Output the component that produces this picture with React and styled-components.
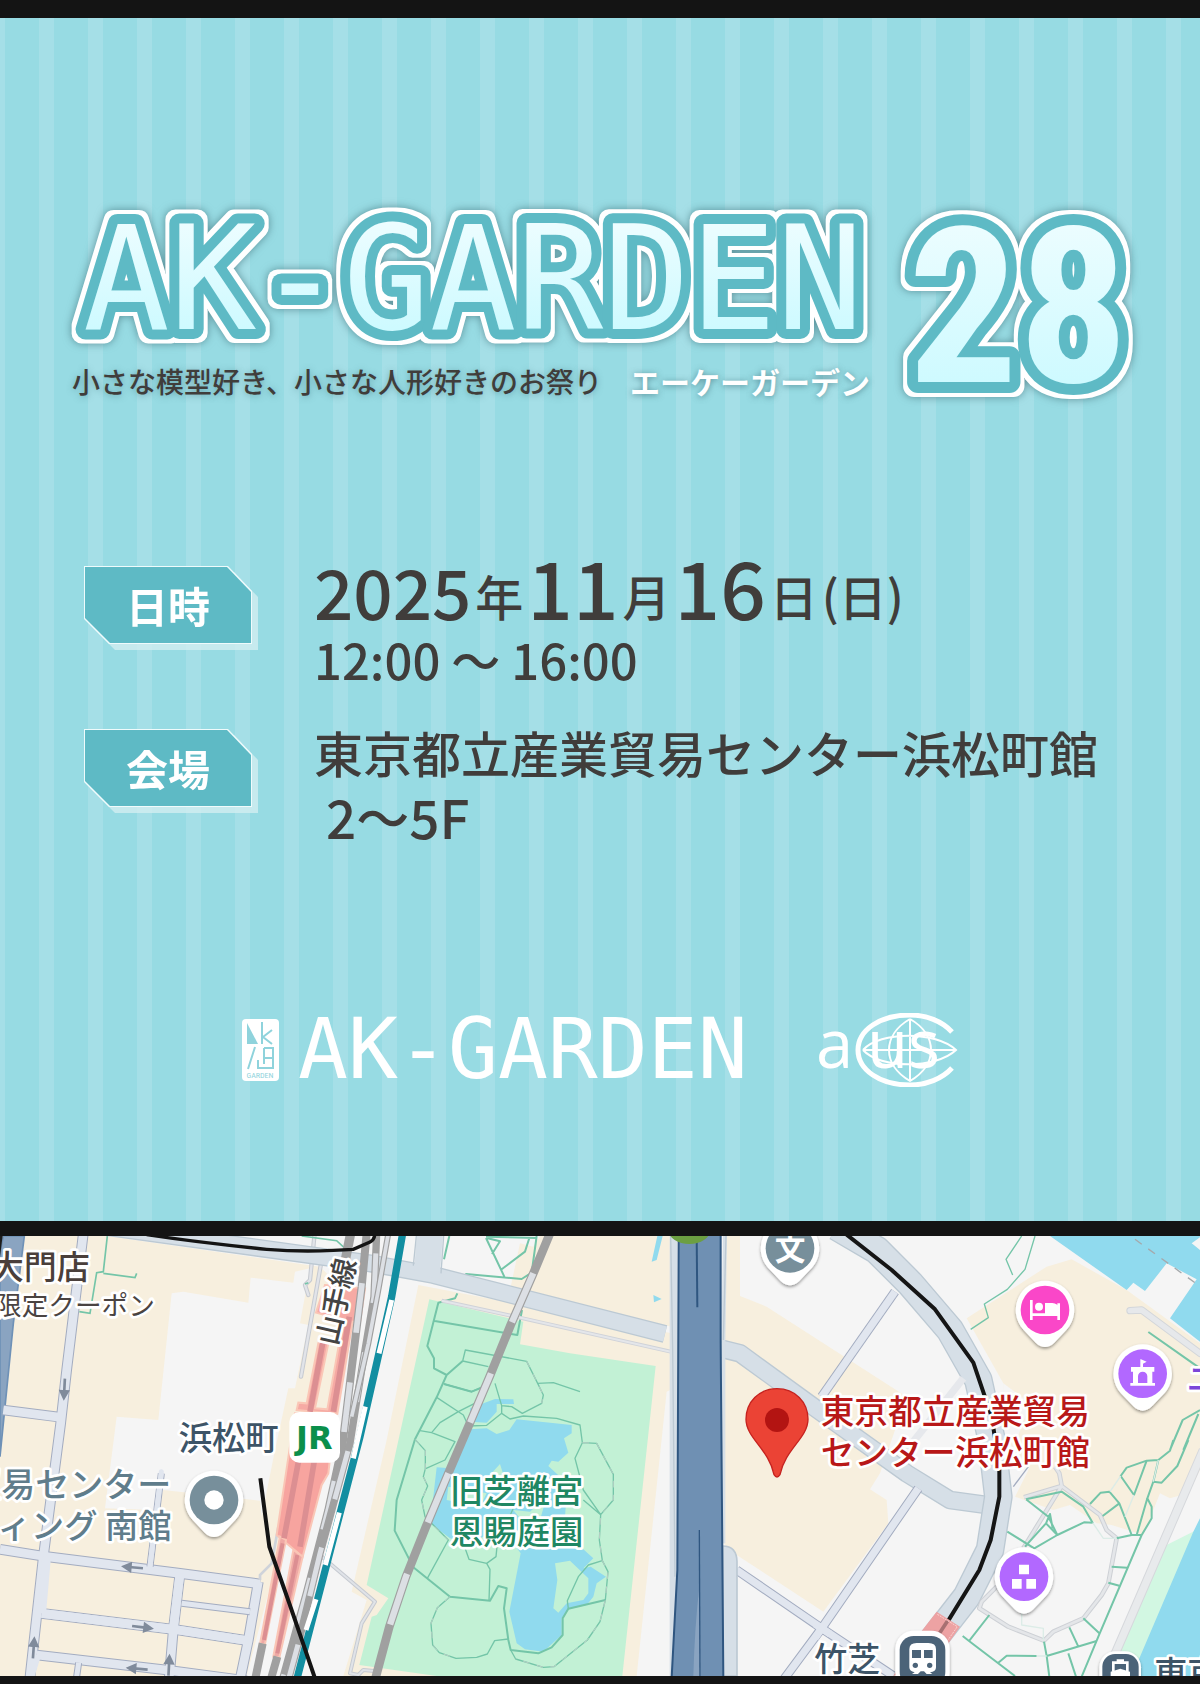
import React from 'react';
import styled, { createGlobalStyle } from 'styled-components';

const ink = '#403d3b';
const teal = '#5ebac5';
const jp = '"Noto Sans CJK JP", "Noto Sans", sans-serif';

const GlobalStyle = createGlobalStyle`
  *, *::before, *::after { box-sizing: border-box; }
  body { margin: 0; background: #141414; }
  h1, p, dl, dd, dt { margin: 0; }
`;

const Page = styled.main`
  display: flex;
  flex-direction: column;
  gap: 15px;
  padding: 18px 0 8px;
  background: #141414;
  color: ${ink};
  font-family: ${jp};
  overflow: hidden;
`;

const Poster = styled.section`
  padding: 182px 60px 134px;
  background: repeating-linear-gradient(
    90deg,
    #a5dfe7 0 5px,
    #97dbe3 5px 39px,
    #a5dfe7 39px 49px
  );
`;

const Heading = styled.h1`
  display: grid;
  grid-template-columns: 83fr 25fr;
  font-weight: 400;
`;

const HeadingLeft = styled.span`
  display: flex;
  flex-direction: column;
  gap: 11px;
`;

const Art = styled.svg`
  display: block;
  width: 100%;
  overflow: visible;
`;

const LogoText = styled.text`
  font-family: ${p => (p.$narrow ? '"Roboto Condensed", Roboto, sans-serif' : '"DejaVu Sans Mono", monospace')};
  font-weight: ${p => (p.$narrow ? 700 : 400)};
  font-size: ${p => p.$size}px;
  stroke: ${teal};
  stroke-width: ${p => (p.$narrow ? 22 : 20)}px;
  stroke-linejoin: round;
  paint-order: stroke;
`;

const Tagline = styled.span`
  display: flex;
  align-items: center;
  gap: 28px;
  padding-left: 12px;
  line-height: 40px;
  white-space: nowrap;
`;

const Lead = styled.span`
  font-size: 28px;
  font-weight: 500;
  text-shadow: 0 1px 6px rgba(60, 110, 120, 0.5);
`;

const Reading = styled.span`
  color: #fff;
  font-size: 30px;
  font-weight: 700;
  text-shadow: 0 1px 6px rgba(60, 110, 120, 0.7);
`;

const Details = styled.dl`
  display: flex;
  flex-direction: column;
  gap: 29px;
  margin-top: 135px;
  padding-left: 24px;
`;

const Detail = styled.div`
  display: flex;
  align-items: flex-start;
  gap: 62px;
`;

const Badge = styled.dt`
  flex: none;
  padding-top: ${p => p.$drop}px;
  filter: drop-shadow(6px 6px 0 rgba(214, 239, 242, 0.75));
`;

const cut = 'polygon(0 0, calc(100% - 24px) 0, 100% 25px, 100% 100%, 25px 100%, 0 calc(100% - 25px))';

const BadgeFrame = styled.span`
  display: block;
  padding: 1px;
  background: #effbfc;
  clip-path: ${cut};
`;

const BadgeFace = styled.span`
  display: block;
  width: 166px;
  line-height: 76px;
  background: ${teal};
  clip-path: ${cut};
  color: #fff;
  font-size: 42px;
  font-weight: 700;
  text-align: center;
`;

const DateLine = styled.p`
  display: flex;
  align-items: baseline;
  gap: 4px;
  margin-bottom: 2px;
  line-height: 1;
  font-weight: 500;
  white-space: nowrap;
`;

const Num = styled.span`
  font-size: ${p => (p.$big ? 80 : 69)}px;
`;

const Unit = styled.span`
  align-self: flex-end;
  padding-bottom: 6px;
  font-size: 48px;
`;

const Line = styled.p`
  padding-left: ${p => (p.$indent ? 12 : 0)}px;
  font-size: ${p => p.$size}px;
  line-height: 64px;
  font-weight: 500;
  white-space: nowrap;
`;

const Organizers = styled.footer`
  display: flex;
  align-items: center;
  margin-top: 165px;
  padding-left: 182px;
  height: 74px;
  color: #fff;
`;

const Card = styled.svg`
  flex: none;
  width: 37px;
  height: 62px;
  margin-right: 19px;
`;

const Wordmark = styled.span`
  font-family: "DejaVu Sans Mono", monospace;
  font-size: 83px;
  line-height: 74px;
  white-space: nowrap;
`;

const Acus = styled.svg`
  flex: none;
  width: 140px;
  height: 74px;
  margin-left: 70px;
`;

const AcusText = styled.text`
  font-family: "Open Sans", sans-serif;
  font-size: 67px;
  fill: #fff;
`;

const MapPanel = styled.section`
  background: #f5f5f5;
`;

const MapArt = styled.svg`
  display: block;
  width: 100%;
`;

const Label = styled.text`
  font-family: ${jp};
  font-size: ${p => p.$size || 100}px;
  font-weight: ${p => p.$weight || 500};
  fill: ${p => p.$color || '#3d5467'};
  stroke: ${p => (p.$plain ? 'none' : '#fff')};
  stroke-width: 16px;
  stroke-linejoin: round;
  paint-order: stroke;
`;

const JrText = styled.text`
  font-family: "DejaVu Sans", sans-serif;
  font-weight: 700;
  font-size: 96px;
  fill: #0a8f4b;
`;

const CardText = styled.text`
  font-family: "Roboto Condensed", Roboto, sans-serif;
  font-size: 8px;
  fill: #8fd3dc;
`;

function OutlineDefs({ id, top, bottom }) {
  return (
    <defs>
      <linearGradient id={`${id}-fill`} gradientUnits="userSpaceOnUse" x1="0" y1={top} x2="0" y2={bottom}>
        <stop offset="0" stopColor="#ecfdff" />
        <stop offset="1" stopColor="#cefaff" />
      </linearGradient>
      <filter id={`${id}-edge`} x="-10%" y="-20%" width="120%" height="150%" colorInterpolationFilters="sRGB">
        <feMorphology in="SourceAlpha" operator="dilate" radius="4" result="fat" />
        <feFlood floodColor="#fff" />
        <feComposite in2="fat" operator="in" result="white" />
        <feGaussianBlur in="fat" stdDeviation="4" result="soft" />
        <feFlood floodColor="#3f6f78" floodOpacity="0.7" />
        <feComposite in2="soft" operator="in" result="shade" />
        <feMerge>
          <feMergeNode in="shade" />
          <feMergeNode in="white" />
          <feMergeNode in="SourceGraphic" />
        </feMerge>
      </filter>
    </defs>
  );
}

function Road({ d, w = 40, fill = '#d6dfe7', edge = '#bcc9d3', border = 4, cap = 'butt' }) {
  return (
    <g fill="none" strokeLinejoin="round" strokeLinecap={cap}>
      <path d={d} stroke={edge} strokeWidth={w + border * 2} />
      <path d={d} stroke={fill} strokeWidth={w} />
    </g>
  );
}

function Streets({ list, w }) {
  return (
    <g fill="none" strokeLinejoin="round">
      {list.map((d, i) => <path key={`e${i}`} d={d} stroke="#a3acc0" strokeWidth={w + 6} />)}
      {list.map((d, i) => <path key={`f${i}`} d={d} stroke="#e1e6ef" strokeWidth={w} />)}
    </g>
  );
}

function Rail({ d, w = 22, dash = '150 150', offset = 0 }) {
  return (
    <g fill="none">
      <path d={d} stroke="#a0a0a0" strokeWidth={w} />
      <path d={d} stroke="#dcdfe4" strokeWidth={w - 7} strokeDasharray={dash} strokeDashoffset={offset} />
    </g>
  );
}

function Pin({ x, y, color, children }) {
  return (
    <g transform={`translate(${x} ${y})`}>
      <path d="M0 -88A88 88 0 0 0 -66 58L-28 98Q0 124 28 98L66 58A88 88 0 0 0 0 -88Z" fill="#fff" filter="url(#pin-shade)" />
      <circle r="73" fill={color} />
      {children}
    </g>
  );
}

function Arrow({ x, y, turn }) {
  return (
    <path
      d="M-4 -32H4V2H17L0 34L-17 2H-4Z"
      fill="#808b9b"
      transform={`translate(${x} ${y}) rotate(${turn})`}
    />
  );
}

function Terrain() {
  return (
    <g>
      <path fill="#f7efde" d="M0 78H320L960 170L1040 250L1000 600L870 900L740 1398H0Z" />
      <path fill="#f5f5f5" d="M515 250L550 245L745 278L752 203L880 218L885 185L930 175L900 340L925 345L885 535L865 535L825 720L785 920L780 872L490 840L465 900L315 895L350 620L475 630Z" />
      <path fill="#f7efde" d="M1255 225L2015 370L2010 540L2000 545L1910 1398H1030L1100 1170L1055 1145L1160 690Z" />
      <path fill="#f7efde" d="M1620 78H2015V350L1530 240L1560 100L1600 110Z" />
      <g transform="translate(2160 0)" fill="#f7efde">
        <path d="M20 78H60V258L140 290L560 560L480 790L450 838L500 870L505 940L310 1205L50 1035L10 1000V420Z" />
        <path d="M740 325L980 170L1055 148L1220 240L1440 400V780L1405 850L1350 865L1320 850L1270 975L1175 945L1130 940L1050 885L1000 900L885 860L930 770L860 690L850 520Z" />
        <path fill="#f5f5f5" d="M850 520L930 580L890 690L850 700Z" />
        <path fill="#90daee" d="M990 78L1220 240L1240 218L1275 243L1340 160L1430 208L1350 325L1440 395V120L1415 100L1440 82V78Z" />
        <path fill="#d2f7e2" d="M1320 1015L1425 962L1250 1398H1150Z" />
        <path fill="#90daee" d="M1440 925L1420 965L1260 1340L1235 1398H1440Z" />
        <path d="M1245 88L1430 222" fill="none" stroke="#a5a9ac" strokeWidth="4" strokeDasharray="25 24" />
      </g>
      <path fill="#c2f1d5" d="M1288 268L1570 335L1560 403L1710 430L1967 468L1867 1398H1310L1078 1365L1115 1220L1130 1215L1165 1165L1100 1125Z" />
    </g>
  );
}

function Garden() {
  return (
    <g transform="translate(1110 0)">
      <g fill="#90daee">
        <path d="M300 658L350 655L380 672L418 660L440 628L605 645V670L582 685L595 728L565 755L545 752L535 768L570 800L590 850L585 920L560 1010L640 1018L670 1045L640 1075L662 1070L708 1100L680 1120L670 1160L650 1185L595 1198L575 1225V1275L520 1325L465 1318L440 1300L418 1205L452 1030L430 1000L380 960L300 1000L240 985L180 940L190 860L200 772L240 775Z" />
        <path d="M300 595L375 567L430 568L432 582L380 582V605L350 638L300 635Z" />
        <path d="M862 78H878L860 150L845 155ZM850 255L875 267L852 277Z" />
      </g>
      <g fill="#c2f1d5">
        <path d="M390 762L402 800H355ZM430 900L480 905L530 860L510 930L470 950ZM235 830L350 850L330 890L230 870Z" />
        <path d="M555 1060L600 1052L655 1105V1150L640 1170L590 1180L565 1208L550 1195L562 1110Z" />
      </g>
      <g fill="none" stroke="#74c5a8" strokeWidth="4" strokeLinejoin="round">
        <path strokeWidth="6" d="M262 250L255 265L205 278L172 408L192 445V475L230 495L278 453M190 332L442 375L456 300M230 495L200 562L135 688L80 870L74 962L130 1072L240 1160L360 1172L385 1128L410 1135L402 1195L415 1290L422 1320L505 1330L545 1312L578 1275V1225L595 1196L706 1170" />
        <path d="M278 453L286 420L470 454L503 520L520 555L515 580L457 610L425 590L395 587M278 453L355 470M503 520L550 518L630 545M222 522L305 545L360 520M375 520L395 587V610L350 646L295 648L280 615L200 562M185 668L210 638L265 605L320 577M150 662L185 668L255 695L225 750L167 776M135 688L166 722V776L160 800L173 828L155 870L165 920L235 990L172 1105M395 610L420 627L460 618L560 625L630 645L637 698L680 700L730 793V870L692 914L640 870M637 698L615 745L640 840L692 914L688 990L697 1052L714 1085L706 1170L690 1235L652 1290L552 1370L520 1372L437 1347L422 1320M240 1160L202 1193L183 1240L188 1305L208 1328L258 1345L320 1342L352 1332L374 1292L415 1287M280 1000L297 1048L350 1060L378 1040L382 1000L430 895M350 1060L360 1078L357 1172M697 1052L655 1065L625 1100L592 1172L595 1196" />
        <path strokeWidth="6" d="M238 78L222 148M282 207L288 192L455 207L485 188L500 78M348 80L502 84M348 84L404 202M366 132L390 94L350 84M392 180L465 125L478 84M222 522L305 545L330 535" />
        <path stroke="#b9cfc5" strokeWidth="3" strokeDasharray="20 22" d="M135 688L166 722V776L160 800L173 828L155 870L165 920L235 990M637 698L680 700L730 793V870L692 914L688 990L697 1052L714 1085L706 1170L690 1235L652 1290L552 1370L520 1372L437 1347M470 454L503 520L520 555L515 580M240 1160L202 1193L183 1240L188 1305L208 1328L258 1345" />
      </g>
    </g>
  );
}

function WestStreets() {
  return (
    <g>
      <path fill="#8aa4c1" stroke="#6e91b7" strokeWidth="5" d="M0 130L10 78H73L40 340L0 740Z" />
      <path fill="#1c1c1c" d="M0 78H8L0 140Z" />
      <Streets
        w={26}
        list={[
          'M250 70L200 480L182 640L130 1040L90 1400',
          'M10 600L182 622',
          'M0 1018L140 1040L540 1090L780 1122',
          'M125 1210L520 1258L745 1292',
          'M110 1335L500 1380L740 1412',
          'M540 1090L520 1258L508 1400',
          'M775 1115L745 1290L722 1400',
        ]}
      />
      <Streets w={15} list={['M484 790L450 1070', 'M545 1180L750 1205', 'M236 1358L230 1400']} />
      <g fill="none" stroke="#e1e6ef" strokeWidth="26">
        <path d="M125 1210L520 1258L745 1292M520 1258L540 1090M140 1040L125 1210M110 1335L90 1400" />
      </g>
      <path d="M484 785L450 1070" stroke="#e1e6ef" strokeWidth="15" fill="none" strokeLinecap="round" />
      <Road d="M945 60L930 210L915 225L925 255" w={7} fill="#e2e4e9" edge="#c6cad1" border={3} cap="round" />
      <Road d="M965 150L903 500" w={7} fill="#e2e4e9" edge="#c6cad1" border={3} cap="round" />
      <g fill="none" stroke="#74c5a8" strokeWidth="5">
        <path d="M322 78L310 185L290 188L270 310L238 305M310 190L405 203L410 190M905 78L1010 92L1035 115M915 222L925 218" />
      </g>
      <Arrow x={193} y={538} turn={3} />
      <Arrow x={397} y={1072} turn={95} />
      <Arrow x={428} y={1252} turn={-83} />
      <Arrow x={411} y={1376} turn={95} />
      <Arrow x={101} y={1313} turn={184} />
      <Arrow x={507} y={1365} turn={183} />
    </g>
  );
}

function Railways() {
  return (
    <g>
      <Road d="M300 48L1110 160L1300 195L1995 372" w={46} />
      <path d="M1290 70L1280 200" stroke="#d6dfe7" strokeWidth="78" fill="none" />
      <path d="M1249 78L1240 167M1331 78L1323 190" stroke="#bcc9d3" strokeWidth="4" fill="none" />
      <Road d="M1325 272L1555 322L2012 425" w={6} fill="#e4e6ea" edge="#cfd2d8" border={3} />
      <Road d="M960 1035L1125 1175L1085 1240L1050 1390L1075 1395L1090 1380L1130 1384" w={6} fill="#e0e3e8" edge="#c6cad1" border={3} />
      <path d="M835 950L815 1060L780 1095V1110" stroke="#cfd3da" strokeWidth="8" fill="none" />

      <g fill="#f6aaa4" stroke="#fac6b6" strokeWidth="6">
        <path d="M975 225L1095 235L1080 338L1058 335L1012 612L890 600L895 578L920 580L955 400L985 400L945 595L982 598L1030 330L948 308Z" />
        <path fill="#f7a49f" d="M885 610H1005L985 790L965 825L908 1040L830 975Z" />
        <path fill="#efa9a5" d="M840 980L858 990L795 1302H780Z" />
        <path fill="#efa9a5" d="M880 1020L908 1040L838 1342L820 1340Z" />
      </g>
      <g fill="none" stroke="#dc8f92" strokeWidth="17">
        <path d="M968 400L930 605M1048 320L1000 605M898 740L852 985M945 740L900 1010" />
        <path d="M848 1000L792 1290M892 1035L832 1330" strokeWidth="12" />
      </g>
      <Rail d="M1052 70L1030 180" w={28} dash="0 300" />
      <Rail d="M1100 70L1085 230L1052 500L1028 700L985 900L920 1150L848 1410" w={24} offset={-150} />
      <Rail d="M1130 70L1122 260L1085 480L1050 700L960 1030L895 1300L865 1410" w={22} offset={-60} />
      <Rail d="M1165 70L1135 240L1105 400L1055 620" w={18} dash="600 600" />
      <Rail d="M788 1300L765 1410" w={24} dash="0 300" />
      <Rail d="M832 1340L812 1410" w={24} dash="0 300" />
      <g fill="none">
        <path d="M1208 70L1175 260L1130 460L1080 680L1020 910L955 1160L890 1410" stroke="#128ea1" strokeWidth="22" />
        <path d="M1175 270L1137 430M1096 590L1060 745M1018 908L976 1065M948 1168L918 1260" stroke="#fff" strokeWidth="15" />
      </g>
      <path d="M440 74Q600 98 800 118Q900 126 1000 121L1060 118L1110 96Q1124 88 1124 74" stroke="#141414" strokeWidth="10" fill="none" />
      <path d="M781 805L808 1010L868 1180L945 1405" stroke="#141414" strokeWidth="12" fill="none" />
      <Rail d="M1650 70L1600 190L1532 345L1470 497L1405 650L1342 797L1278 950L1218 1100L1168 1250L1125 1410" w={26} dash="160 166" offset={-130} />
    </g>
  );
}

function EastStreets() {
  return (
    <g transform="translate(2160 0)">
      <Road d="M0 415L60 430L280 590L560 790L690 870L800 885" w={48} />
      <Road d="M350 50L470 120L570 220L690 360L775 510L815 690L835 860L810 1020L740 1160L600 1340" w={78} />
      <Streets w={22} list={['M525 245L305 560', 'M595 835L305 1255L190 1410', 'M50 1080L305 1255L520 1398']} />
      <path d="M305 1255L285 1285M285 1242L330 1272" stroke="#e1e6ef" strokeWidth="22" fill="none" />
      <path d="M730 505L560 720" stroke="#e6e8ec" strokeWidth="22" fill="none" />
      <path d="M925 770L880 830" stroke="#a3acc0" strokeWidth="4" fill="none" />
      <path d="M380 74L515 180L645 298L760 458L815 620L838 770V860L812 990L778 1080L683 1235" stroke="#151515" strokeWidth="12" fill="none" strokeLinejoin="round" />
      <path d="M650 1205L720 1250L650 1350L520 1398L600 1270Z" fill="#eda2a3" />
      <path d="M683 1232L655 1275" stroke="#a77072" strokeWidth="11" />
      <path d="M652 1213L712 1250L670 1310" fill="none" stroke="#fbd3d0" strokeWidth="3" strokeDasharray="6 3" />

      <Road d="M1440 430L1265 300L1230 302" w={16} fill="#e6e8eb" edge="#d3d6da" border={3} cap="round" />
      <Road d="M1450 720L1290 1090L1160 1390" w={22} fill="#e8eaec" edge="#d6d8dc" border={3} />
      <Road
        d="M910 1015L1025 828L1018 790L1005 770M1025 828L912 862M1025 828L1140 915L1160 960L1190 985L1165 1120L1145 1155L1090 1225L1000 1265L972 1292L865 1250L778 1195L785 1175L830 1130"
        w={8}
        fill="#e4e6e9"
        edge="#cdd0d5"
        border={3}
      />
      <g fill="none" stroke="#74c5a8" strokeWidth="6" strokeLinejoin="round">
        <path strokeWidth="4" d="M905 78L858 148L878 195M945 78L915 178L862 238L793 282L805 323L752 358" />
        <path d="M1285 366L1440 475M1440 600L1388 630L1350 720M1435 612L1390 720M1360 690L1350 722L1315 750L1280 752L1220 773L1202 798L1242 855L1280 752M1405 690L1372 768L1325 818L1300 815L1282 865L1295 890V925L1265 975L1135 1280L1085 1400M1300 815L1315 750M1282 865L1250 975M1265 975H1235L1198 880L1168 845L1142 848L1110 882M1198 880L1148 918M1190 985L1235 975" />
        <path d="M918 868L1025 845L1090 890L1118 938L1092 937L1012 975L943 1015L862 965M918 868L985 920L1012 975L978 940L990 912L998 955M978 940L915 1010M1175 1070L1222 1073M1165 1118L1198 1127M1090 1225L1138 1270M1048 1252L1075 1310M1130 1293L980 1338L988 1400M980 1338L972 1295M1045 1330L1068 1400M950 1338L860 1337L835 1358M728 1278L750 1295L885 1398M748 1292L808 1215" />
        <path stroke="#dcece7" strokeWidth="4" d="M1170 845L1202 798M1215 920L1242 855M1118 938L1150 985H1190M905 1210V1245L970 1255V1290M1300 815L1315 750M950 1338H980" />
      </g>
    </g>
  );
}

function Expressway() {
  return (
    <g transform="translate(1110 0)">
      <path d="M910 78V1398" stroke="#d6dfe7" strokeWidth="22" />
      <path d="M902 78L908 420L915 1100" stroke="#bcc9d3" strokeWidth="4" fill="none" />
      <path d="M1065 78L1060 400V1000" stroke="#d6dfe7" strokeWidth="12" fill="none" />
      <path d="M1068 78L1060 390" stroke="#bcc9d3" strokeWidth="4" fill="none" />
      <path d="M1058 1008Q1100 1008 1101 1055V1398H1058Z" fill="#d6dfe7" stroke="#bcc9d3" strokeWidth="5" />
      <path d="M926 74L922 1080L905 1402H1060L1052 400V74Z" fill="#6f90b3" stroke="#2f5680" strokeWidth="6" />
      <path d="M980 78L982 292" stroke="#2f5680" strokeWidth="6" />
      <path d="M988 1130L992 1398H970Q974 1250 988 1130Z" fill="#8aa4c1" />
      <path d="M988 960L990 1398" stroke="#2f5680" strokeWidth="4" />
      <ellipse cx="958" cy="62" rx="62" ry="40" fill="#6c9f42" />
    </g>
  );
}

function Places() {
  return (
    <g>
      <Pin x={642} y={180 + 690} color="#778f9b"><circle r="29" fill="#fff" /></Pin>
      <g transform="translate(2160 0)">
        <Pin x={210} y={115} color="#778f9b" />
        <Label $plain $color="#fff" $weight={700} $size={92} x={210} y={150} textAnchor="middle">文</Label>
        <Pin x={975} y={300} color="#fa47c8">
          <path d="M-41 -30V30M-40 14H44M41 30V-20" stroke="#fff" strokeWidth="8" fill="none" />
          <circle cx="-18" cy="-10" r="12" fill="#fff" />
          <path d="M0 -21H22Q38 -19 44 -8V12H0Z" fill="#fff" />
        </Pin>
        <Pin x={1268} y={491} color="#b268ff">
          <path fill="#fff" d="M-5 -43L12 -36L1 -30V-20H35V-6H29V28H37V36H-37V28H-29V-6H-35V-20H-7V-43ZM-14 28H14V8A14 14 0 0 0 -14 8Z" fillRule="evenodd" />
        </Pin>
        <Pin x={912} y={1100} color="#b268ff">
          <path fill="#fff" d="M-15 -36H15V-7H-15ZM-36 7H-7V36H-36ZM7 7H36V36H7Z" />
        </Pin>
        <g transform="translate(171 630)">
          <path d="M0 -94C-54 -94 -93 -54 -93 -2C-93 54 -24 88 -9 164Q0 178 9 164C24 88 93 54 93 -2C93 -54 54 -94 0 -94Z" fill="#eb4335" stroke="#c5221f" strokeWidth="4" />
          <circle r="36" fill="#b31412" />
        </g>
        <g>
          <rect x="526" y="1262" width="163" height="180" rx="55" fill="#fff" filter="url(#pin-shade)" />
          <rect x="539" y="1278" width="137" height="150" rx="42" fill="#4b6378" />
          <path fill="#fff" fillRule="evenodd" d="M568 1318Q568 1299 590 1299H625Q648 1299 648 1318V1372Q648 1385 630 1387L637 1392H620L612 1384H602L594 1392H576L584 1387Q568 1384 568 1372ZM576 1320V1344H603V1320ZM612 1320V1344H638V1320Z" />
          <circle cx="586" cy="1366" r="8" fill="#4b6378" />
          <circle cx="629" cy="1366" r="8" fill="#4b6378" />
        </g>
        <g>
          <rect x="1138" y="1324" width="125" height="130" rx="48" fill="#fff" filter="url(#pin-shade)" />
          <rect x="1147" y="1332" width="109" height="120" rx="38" fill="#4b6378" />
          <path d="M1180 1385V1358H1222V1385M1190 1352H1212" fill="none" stroke="#fff" strokeWidth="8" />
          <path d="M1172 1385L1201 1376L1230 1385V1400H1172Z" fill="#fff" />
        </g>
      </g>
      <rect x="868" y="606" width="152" height="152" rx="30" fill="#fff" />
      <JrText x="943" y="716" textAnchor="middle">JR</JrText>
    </g>
  );
}

function Labels() {
  return (
    <g>
      <Label $color="#4a3f3b" x="-28" y="208" $size={99}>大門店</Label>
      <Label $color="#4a4341" x="-15" y="314" $size={80} $weight={400}>限定クーポン</Label>
      <Label $color="#444" $size={88} textAnchor="middle" transform="translate(1040 282) rotate(-77)">山手線</Label>
      <Label x="536" y="720">浜松町</Label>
      <Label $color="#607d8b" x="-98" y="860" $size={102}>貿易センター</Label>
      <Label $color="#607d8b" x="515" y="984" textAnchor="end">ィング 南館</Label>
      <Label $color="#1f8763" x="1350" y="879">旧芝離宮</Label>
      <Label $color="#1f8763" x="1350" y="1001">恩賜庭園</Label>
      <Label $color="#b81818" x="2462" y="642" $size={101}>東京都立産業貿易</Label>
      <Label $color="#b81818" x="2462" y="764" $size={101}>センター浜松町館</Label>
      <Label $color="#7b46d9" x="3560" y="542">ユ</Label>
      <Label x="2443" y="1382" $size={99}>竹芝</Label>
      <Label x="3463" y="1426" $size={99}>東京</Label>
    </g>
  );
}

export default function App() {
  return (
    <>
      <GlobalStyle />
      <Page>
        <Poster>
          <Heading>
            <HeadingLeft>
              <Art viewBox="0 0 830 150">
                <OutlineDefs id="name" top={23} bottom={128} />
                <LogoText $size={144} x="23" y="129" fill="url(#name-fill)" filter="url(#name-edge)">AK-GARDEN</LogoText>
              </Art>
              <Tagline>
                <Lead>小さな模型好き、小さな人形好きのお祭り</Lead>
                <Reading>エーケーガーデン</Reading>
              </Tagline>
            </HeadingLeft>
            <Art viewBox="0 0 250 210">
              <OutlineDefs id="issue" top={23} bottom={183} />
              <LogoText $narrow $size={218} x="18" y="182" fill="url(#issue-fill)" filter="url(#issue-edge)">28</LogoText>
            </Art>
          </Heading>

          <Details>
            <Detail>
              <Badge $drop={21}><BadgeFrame><BadgeFace>日時</BadgeFace></BadgeFrame></Badge>
              <dd>
                <DateLine>
                  <Num>2025</Num><Unit>年</Unit><Num $big>11</Num><Unit>月</Unit><Num $big>16</Num><Unit>日</Unit><Unit>(日)</Unit>
                </DateLine>
                <Line $size={49}>12:00 ～ 16:00</Line>
              </dd>
            </Detail>
            <Detail>
              <Badge $drop={9}><BadgeFrame><BadgeFace>会場</BadgeFace></BadgeFrame></Badge>
              <dd>
                <Line $size={49}>東京都立産業貿易センター浜松町館</Line>
                <Line $size={53} $indent>2～5F</Line>
              </dd>
            </Detail>
          </Details>

          <Organizers>
            <Card viewBox="0 0 37 62" aria-hidden="true">
              <rect width="37" height="62" rx="4" fill="#fff" />
              <path d="M5 4L16 25H5Z" fill="#8fd3dc" />
              <path d="M20 3V25M30 11L21 18L30 25M13 28L6 50M22 29V39H31M22 29H31V49H16V41M22 39V45" fill="none" stroke="#8fd3dc" strokeWidth="2" />
              <CardText x="18" y="59" textAnchor="middle">GARDEN</CardText>
            </Card>
            <Wordmark>AK-GARDEN</Wordmark>
            <Acus viewBox="0 0 140 74">
              <path d="M134 19C124 8 108 2 92 2C62 2 40 17 40 37C40 57 62 72 92 72C108 72 124 66 134 55" fill="none" stroke="#fff" strokeWidth="5" />
              <path d="M45 37H138M92 6V68M92 6C64 22 64 52 92 68C120 52 120 22 92 6M45 37C62 18 118 18 138 37C118 56 62 56 45 37" fill="none" stroke="#fff" strokeWidth="2" />
              <AcusText x="-2" y="55">a</AcusText>
              <AcusText x="49" y="55">us</AcusText>
            </Acus>
          </Organizers>
        </Poster>

        <MapPanel aria-label="浜松町">
          <MapArt viewBox="0 78 3600 1320">
            <defs>
              <filter id="pin-shade" x="-30%" y="-30%" width="160%" height="170%">
                <feDropShadow dx="0" dy="5" stdDeviation="5" floodColor="#000" floodOpacity="0.4" />
              </filter>
            </defs>
            <Terrain />
            <Garden />
            <WestStreets />
            <Railways />
            <EastStreets />
            <Expressway />
            <Places />
            <Labels />
          </MapArt>
        </MapPanel>
      </Page>
    </>
  );
}
